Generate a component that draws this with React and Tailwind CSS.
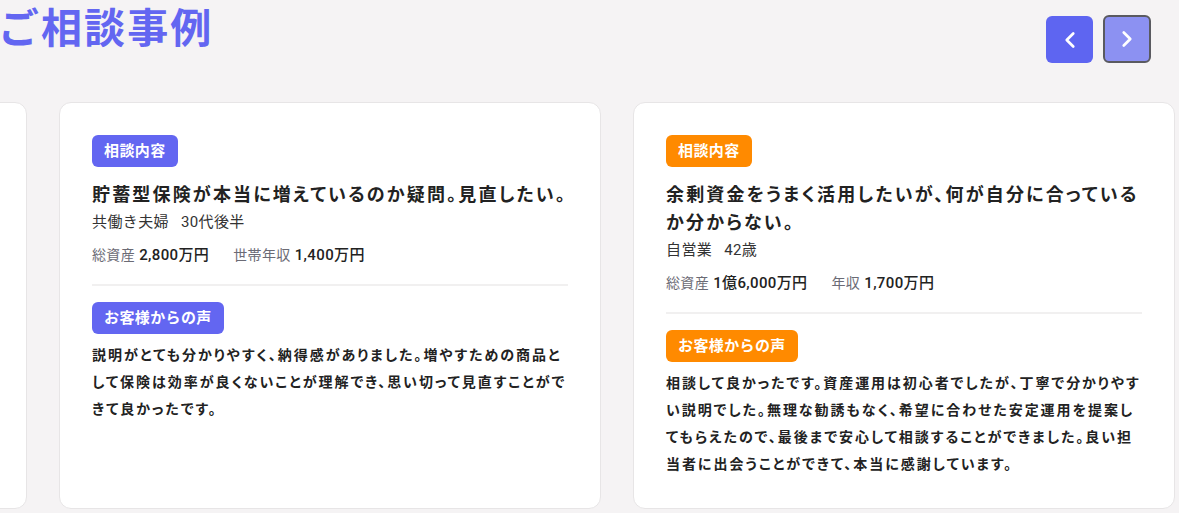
import { ChevronLeft, ChevronRight } from 'lucide-react';

const cases = [
  {
    color: 'bg-[#6366f1]',
    title: '貯蓄型保険が本当に増えているのか疑問。見直したい。',
    who: '共働き夫婦',
    age: '30代後半',
    stats: [
      ['総資産', '2,800万円'],
      ['世帯年収', '1,400万円'],
    ],
    voice:
      '説明がとても分かりやすく、納得感がありました。増やすための商品として保険は効率が良くないことが理解でき、思い切って見直すことができて良かったです。',
  },
  {
    color: 'bg-[#6366f1]',
    title: '貯蓄型保険が本当に増えているのか疑問。見直したい。',
    who: '共働き夫婦',
    age: '30代後半',
    stats: [
      ['総資産', '2,800万円'],
      ['世帯年収', '1,400万円'],
    ],
    voice:
      '説明がとても分かりやすく、納得感がありました。増やすための商品として保険は効率が良くないことが理解でき、思い切って見直すことができて良かったです。',
  },
  {
    color: 'bg-[#ff8a00]',
    title: '余剰資金をうまく活用したいが、何が自分に合っているか分からない。',
    who: '自営業',
    age: '42歳',
    stats: [
      ['総資産', '1億6,000万円'],
      ['年収', '1,700万円'],
    ],
    voice:
      '相談して良かったです。資産運用は初心者でしたが、丁寧で分かりやすい説明でした。無理な勧誘もなく、希望に合わせた安定運用を提案してもらえたので、最後まで安心して相談することができました。良い担当者に出会うことができて、本当に感謝しています。',
  },
];

function Badge({ color, children }) {
  return (
    <div className="flex">
      <span className={`inline-flex items-center h-8 ${color} text-white text-[15px] font-bold px-3 rounded-md tracking-wide`}>
        {children}
      </span>
    </div>
  );
}

function CaseCard({ item }) {
  return (
    <div className="w-[542px] shrink-0 bg-white border border-[#e7e5e6] rounded-xl px-8 pt-8 pb-[30px]">
      <Badge color={item.color}>相談内容</Badge>
      <h3 className="mt-[14px] text-lg leading-7 font-bold tracking-[0.12em] text-[#222] [font-feature-settings:'palt']">
        {item.title}
      </h3>
      <p className="mt-0.5 flex gap-3 text-[15px] leading-[22px] text-[#333] tracking-wide">
        <span>{item.who}</span>
        <span>{item.age}</span>
      </p>
      <div className="mt-3 flex gap-6 text-[15px] leading-5 tracking-wide">
        {item.stats.map(([label, value]) => (
          <span key={label}>
            <span className="text-sm text-[#6b6b75]">{label}</span>
            <span className="ml-1 font-medium text-[#222]">{value}</span>
          </span>
        ))}
      </div>
      <div className="mt-[19px] h-[2px] bg-[#f1f0f0]" />
      <div className="mt-4">
        <Badge color={item.color}>お客様からの声</Badge>
      </div>
      <p className="mt-2 text-sm leading-[27px] font-bold tracking-[0.14em] text-[#222] [font-feature-settings:'palt']">
        {item.voice}
      </p>
    </div>
  );
}

export default function App() {
  return (
    <div
      className="w-[1179px] h-[513px] overflow-hidden bg-[#f5f3f4]"
      style={{ fontFamily: 'Roboto, "Noto Sans CJK JP", sans-serif' }}
    >
      {/* ヘッダー */}
      <div className="flex items-start justify-between pr-7">
        <h2 className="text-[41px] leading-[58px] font-bold tracking-wider text-[#6366f1] -ml-[2px]">ご相談事例</h2>
        <div className="flex gap-[10px] mt-4">
          <button className="w-[47px] h-[47px] rounded-md bg-[#5e65f1] flex items-center justify-center text-white">
            <ChevronLeft size={26} strokeWidth={2.5} />
          </button>
          <button className="w-[48px] h-[48px] rounded-md bg-[#8c91f2] border-2 border-[#5a5a60] flex items-center justify-center text-white -mt-px">
            <ChevronRight size={26} strokeWidth={2.5} />
          </button>
        </div>
      </div>

      {/* カルーセル */}
      <div className="mt-[39px] flex gap-8 -ml-[515px]">
        {cases.map((item, i) => (
          <CaseCard key={i} item={item} />
        ))}
      </div>
    </div>
  );
}
